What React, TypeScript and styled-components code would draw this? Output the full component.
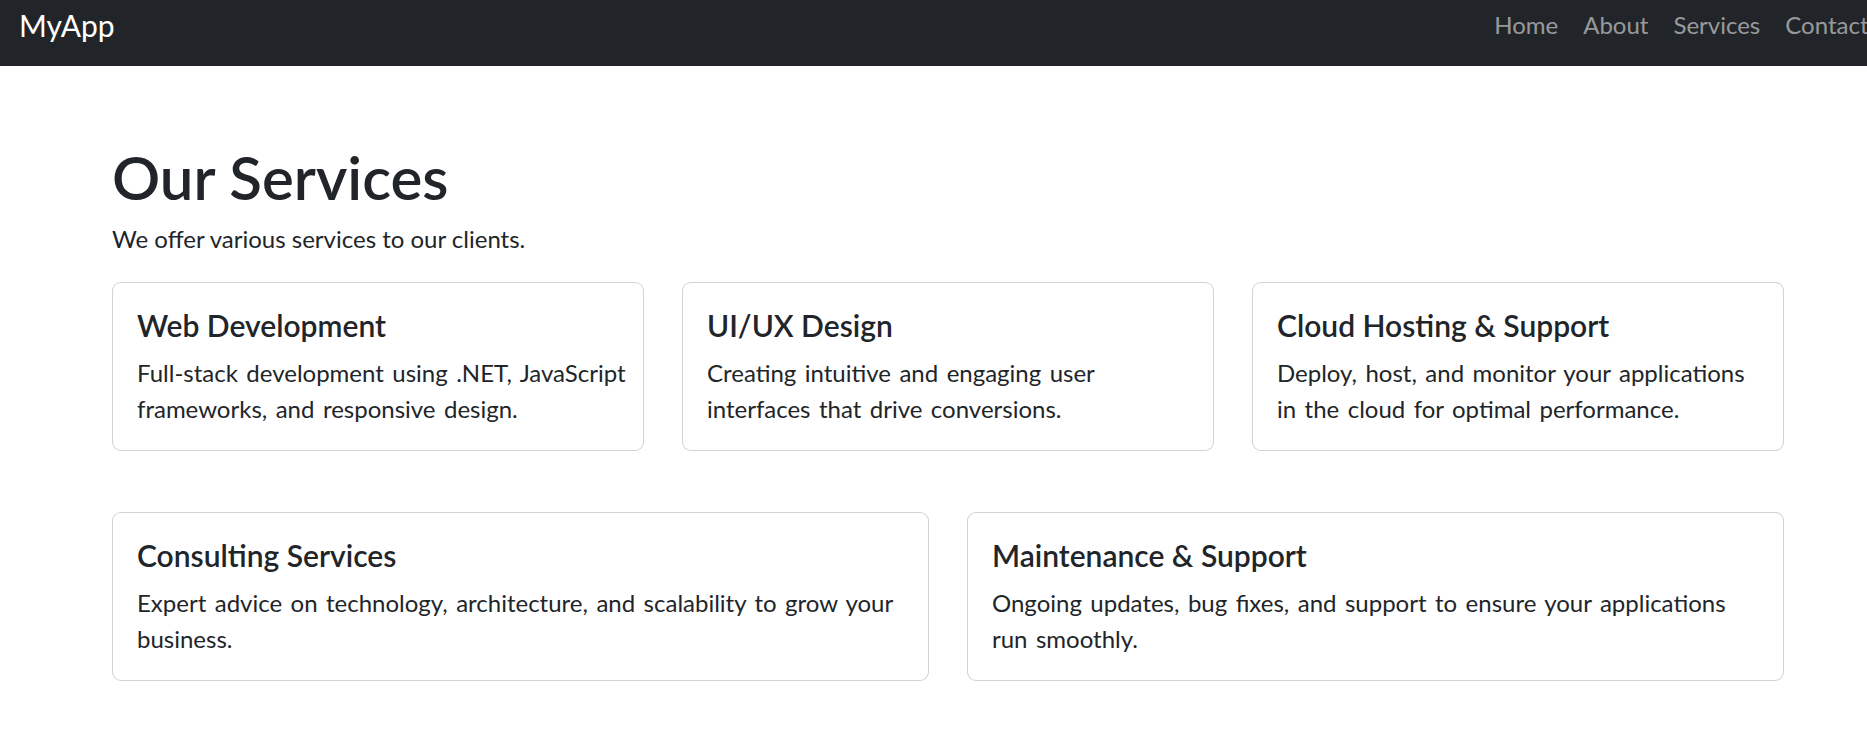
import React from "react";
import styled, { createGlobalStyle } from "styled-components";

const GlobalStyle = createGlobalStyle`
  *, *::before, *::after { box-sizing: border-box; }
  html, body {
    margin: 0;
    padding: 0;
    background: #ffffff;
    overflow-x: hidden;
  }
  body {
    font-family: Lato, "Open Sans", "Liberation Sans", sans-serif;
    font-size: 24px;
    line-height: 1.5;
    color: #212529;
  }
`;

const Navbar = styled.nav`
  display: flex;
  align-items: center;
  height: 66px;
  padding: 0 0 16px 19px;
  background: #212529;
  overflow: hidden;
  white-space: nowrap;
`;

const Brand = styled.a`
  font-size: 30px;
  line-height: 1.2;
  color: #ffffff;
  text-decoration: none;
`;

const NavList = styled.ul`
  display: flex;
  list-style: none;
  margin: 0 -14px 0 auto;
  padding: 0;
`;

const NavLink = styled.a`
  display: block;
  padding: 0 12.5px;
  font-size: 24px;
  line-height: 1.5;
  color: rgba(255, 255, 255, 0.55);
  text-decoration: none;
`;

const Main = styled.main`
  width: 1672px;
  margin-left: 112px;
  padding-top: 75px;
`;

const Title = styled.h1`
  margin: 0 0 8px;
  font-size: 60px;
  font-weight: 600;
  line-height: 1.2;
`;

const Lead = styled.p`
  margin: 0 0 25px;
  font-size: 24px;
  line-height: 36px;
`;

const CardGrid = styled.div<{ $cols: number }>`
  display: grid;
  grid-template-columns: repeat(${(p) => p.$cols}, 1fr);
  gap: 38px;
  margin-bottom: 61px;
`;

const Card = styled.div`
  background: #ffffff;
  border: 1px solid rgba(0, 0, 0, 0.175);
  border-radius: 9px;
  padding: 24px 15.5px 23px 24px;
`;

const CardTitle = styled.h5`
  margin: 0 0 12px;
  font-size: 30px;
  font-weight: 600;
  line-height: 36px;
`;

const CardText = styled.p`
  margin: 0;
  font-size: 24px;
  line-height: 36px;
  word-spacing: 2.3px;
`;

const rows = [
  [
    { t: "Web Development", d: "Full-stack development using .NET, JavaScript frameworks, and responsive design." },
    { t: "UI/UX Design", d: "Creating intuitive and engaging user interfaces that drive conversions." },
    { t: "Cloud Hosting & Support", d: "Deploy, host, and monitor your applications in the cloud for optimal performance." },
  ],
  [
    { t: "Consulting Services", d: "Expert advice on technology, architecture, and scalability to grow your business." },
    { t: "Maintenance & Support", d: "Ongoing updates, bug fixes, and support to ensure your applications run smoothly." },
  ],
];

export default function App() {
  return (
    <>
      <GlobalStyle />
      <Navbar>
        <Brand href="#">MyApp</Brand>
        <NavList>
          {["Home", "About", "Services", "Contact"].map((l) => (
            <li key={l}>
              <NavLink href="#">{l}</NavLink>
            </li>
          ))}
        </NavList>
      </Navbar>
      <Main>
        <Title>Our Services</Title>
        <Lead>We offer various services to our clients.</Lead>
        {rows.map((row, i) => (
          <CardGrid key={i} $cols={row.length}>
            {row.map((c) => (
              <Card key={c.t}>
                <CardTitle>{c.t}</CardTitle>
                <CardText>{c.d}</CardText>
              </Card>
            ))}
          </CardGrid>
        ))}
      </Main>
    </>
  );
}
